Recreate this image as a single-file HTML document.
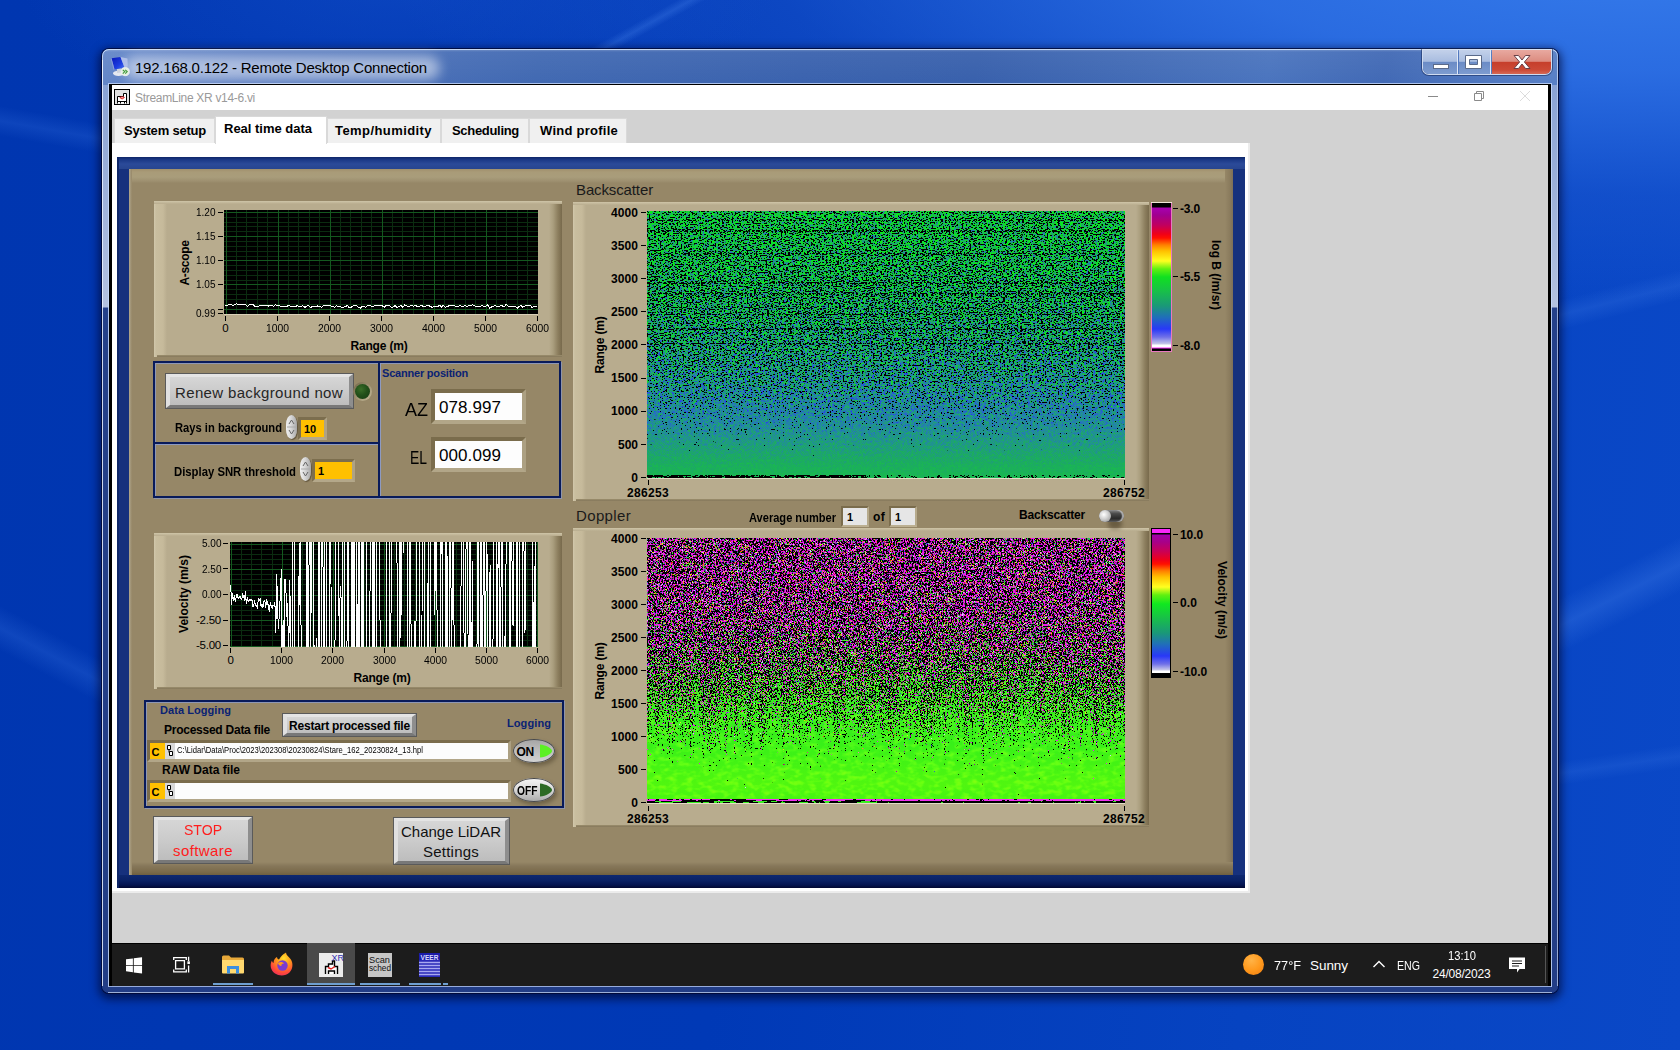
<!DOCTYPE html>
<html lang="en"><head><meta charset="utf-8"><title>192.168.0.122 - Remote Desktop Connection</title>
<style>
html,body{margin:0;padding:0}
body{width:1680px;height:1050px;overflow:hidden;position:relative;font-family:"Liberation Sans",sans-serif;
background:
 radial-gradient(ellipse 380px 150px at 400px -20px, rgba(24,84,206,.45) 0%, rgba(24,84,206,0) 100%),
 radial-gradient(ellipse 1280px 350px at 1660px -50px, rgba(54,124,236,1) 0%, rgba(46,112,228,.9) 35%, rgba(32,92,212,.4) 70%, rgba(20,80,200,0) 100%),
 linear-gradient(95deg, #0036b0 0%, #0039b6 45%, #0643c1 75%, #0a48c7 100%);}
.t{position:absolute;white-space:nowrap}
div{box-sizing:border-box}
svg{position:absolute;overflow:visible}
</style></head><body>
<div style="position:absolute;left:-50px;top:120px;width:260px;height:30px;transform:rotate(10deg);background:linear-gradient(to bottom,rgba(60,120,230,0),rgba(60,120,230,.22),rgba(60,120,230,0))"></div>
<div style="position:absolute;left:-60px;top:640px;width:240px;height:40px;transform:rotate(28deg);background:linear-gradient(to bottom,rgba(60,120,230,0),rgba(60,120,230,.25),rgba(60,120,230,0))"></div>
<div style="position:absolute;left:1540px;top:560px;width:200px;height:50px;transform:rotate(-27deg);background:linear-gradient(to bottom,rgba(70,130,235,0),rgba(70,130,235,.3),rgba(70,130,235,0))"></div>
<div style="position:absolute;left:1540px;top:280px;width:200px;height:30px;transform:rotate(-14deg);background:linear-gradient(to bottom,rgba(70,130,235,0),rgba(70,130,235,.22),rgba(70,130,235,0))"></div>
<div style="position:absolute;left:1540px;top:750px;width:200px;height:24px;transform:rotate(-8deg);background:linear-gradient(to bottom,rgba(70,130,235,0),rgba(70,130,235,.18),rgba(70,130,235,0))"></div>
<div style="position:absolute;left:560px;top:16px;width:180px;height:14px;transform:rotate(-29deg);background:linear-gradient(to bottom,rgba(70,130,235,0),rgba(70,130,235,.3),rgba(70,130,235,0))"></div>
<div id="win" style="position:absolute;left:102px;top:49px;width:1456px;height:944px;border-radius:7px;
box-shadow:0 0 0 1px rgba(0,8,50,.8),0 3px 10px 3px rgba(0,6,45,.7);
background:linear-gradient(to bottom,#7d99cf 0px,#8aa3d4 36px,#b3c1e0 258px,#24408a 259px,#223d86 100%);"></div>
<div style="position:absolute;left:102px;top:49px;width:1456px;height:36px;border-radius:7px 7px 0 0;
background:linear-gradient(to bottom,rgba(255,255,255,.28) 0,rgba(255,255,255,.05) 3px,rgba(255,255,255,0) 100%),
linear-gradient(100deg,#6487c8 0%,#5578be 10%,#4169b2 30%,#3a62ae 48%,#3860ac 60%,#4a74be 80%,#4169b5 88%,#5880c6 100%);
box-shadow:inset 0 1px 0 rgba(220,235,255,.8),inset 1px 0 0 rgba(220,235,255,.7),inset -1px 0 0 rgba(200,220,250,.6)"></div>
<div style="position:absolute;left:102px;top:60px;width:1px;height:926px;background:rgba(235,242,255,.85)"></div>
<div style="position:absolute;left:1557px;top:60px;width:1px;height:926px;background:rgba(190,205,235,.75)"></div>
<div style="position:absolute;left:108px;top:84px;width:1px;height:903px;background:rgba(200,218,250,.85)"></div>
<div style="position:absolute;left:1551px;top:84px;width:1px;height:903px;background:rgba(200,218,250,.85)"></div>
<div style="position:absolute;left:108px;top:986px;width:1444px;height:1px;background:rgba(170,190,235,.85)"></div>
<div style="position:absolute;left:108px;top:83px;width:1444px;height:1px;background:rgba(200,218,250,.8)"></div>
<div style="position:absolute;left:108px;top:992px;width:1444px;height:1px;background:rgba(210,225,250,.7)"></div>
<div style="position:absolute;left:124px;top:56px;width:316px;height:24px;border-radius:12px;background:rgba(255,255,255,.5);filter:blur(6px)"></div>
<div class="t" style="left:135.00px;top:57.67px;font-size:15px;line-height:20px;color:#000;letter-spacing:-0.221px;">192.168.0.122 - Remote Desktop Connection</div>
<svg style="left:110px;top:56px" width="22" height="22" viewBox="0 0 22 22"><defs><linearGradient id="rdg" x1="0" y1="0" x2="1" y2="1"><stop offset="0" stop-color="#0818b8"/><stop offset="0.6" stop-color="#1c3ce0"/><stop offset="1" stop-color="#4a74f0"/></linearGradient></defs>
<ellipse cx="8.500" cy="17.300" rx="5.500" ry="2.600" fill="#e6e9f0"/><path d="M7 13 L11 12.500 L11.500 16.500 L7 17 Z" fill="#cfd4de"/>
<path d="M1.500 2.200 L10.500 1 L14.500 11.500 L4.500 13.500 Z" fill="url(#rdg)"/>
<path d="M10.500 1 L17.500 2.500 L17.800 10.500 L14.500 11.500 Z" fill="#b4c2ea" opacity=".92"/>
<path d="M1.500 2.200 L4.500 13.500 L3.600 13.800 L0.800 2.800 Z" fill="#8ea0e0"/>
<circle cx="15.200" cy="15.600" r="4.100" fill="#e4eee0" stroke="#f4f7f2" stroke-width="0.800"/>
<path d="M12.800 17.600 L14.800 15.600 L12.800 13.800 M15.200 17.600 L17.200 15.600 L15.200 13.800" stroke="#3f9a3a" stroke-width="1.100" fill="none"/></svg>
<div style="position:absolute;left:1423px;top:50px;width:128px;height:24px;border-radius:0 0 6px 6px;box-shadow:0 0 0 1px rgba(225,235,252,.9),0 0 0 2px rgba(20,40,90,.55);overflow:hidden">
<div style="position:absolute;left:0;top:0;width:35px;height:25px;background:linear-gradient(to bottom,#c3d1ea 0,#a9bde0 45%,#6b8cc6 50%,#7f9dd0 100%);border-right:1px solid #dfe8f6"></div>
<div style="position:absolute;left:36px;top:0;width:32px;height:25px;background:linear-gradient(to bottom,#c3d1ea 0,#a9bde0 45%,#6b8cc6 50%,#7f9dd0 100%);border-right:1px solid #dfe8f6"></div>
<div style="position:absolute;left:69px;top:0;width:59px;height:25px;background:linear-gradient(to bottom,#e8a9a0 0,#dc8c80 45%,#c63f2c 50%,#cc4a36 80%,#d8705c 100%)"></div>
</div>
<svg style="left:1422px;top:49.5px" width="130" height="25" viewBox="0 0 130 25">
<rect x="11.5" y="14.5" width="15" height="4" fill="#fff" stroke="#5a6a8a" stroke-width="1"/>
<path d="M43.5 5.500 h16 v13 h-16 Z M47.500 9.500 v5 h8 v-5 Z" fill="#fff" fill-rule="evenodd" stroke="#5a6a8a" stroke-width="1"/>
<path d="M92 5.500 L96.500 5.500 L100 10 L103.500 5.500 L108 5.500 L102.400 12 L108 18.500 L103.500 18.500 L100 14 L96.500 18.500 L92 18.500 L97.600 12 Z" fill="#fff" stroke="#6a4048" stroke-width="1"/>
</svg>
<div style="position:absolute;left:109px;top:84px;width:1442px;height:902px;background:#000"></div>
<div style="position:absolute;left:112px;top:85px;width:1436px;height:25px;background:#fff"></div>
<div style="position:absolute;left:112px;top:110px;width:1436px;height:833px;background:#d2d2d2"></div>
<svg style="left:114px;top:89px" width="17" height="17" viewBox="0 0 17 17"><rect x="0.500" y="0.500" width="15" height="15" fill="#e2e2e2" stroke="#000"/>
<path d="M3.500 14.500 V7.500 H9.500 V4.500 H12.500 V14.500 M6.500 14.500 V12.500 H10.500 V14.500 M3.500 12.500 H12.500" fill="#fff" stroke="#000" stroke-width="1"/>
<path d="M5.800 8.500 Q8 11.500 10.400 8.500 Q8 7 5.800 8.500" fill="none" stroke="#e01818" stroke-width="1"/></svg>
<div class="t" style="left:135.00px;top:90.14px;font-size:12px;line-height:16px;color:#9a9a9a;letter-spacing:-0.307px;">StreamLine XR v14-6.vi</div>
<svg style="left:1420px;top:87px" width="120" height="18" viewBox="0 0 120 18">
<path d="M8 9.500 h10" stroke="#8a8a8a" stroke-width="1"/>
<path d="M54.500 6.500 h7 v7 h-7 Z M56.500 6.500 v-2 h7 v7 h-2" fill="none" stroke="#8a8a8a" stroke-width="1"/>
<path d="M100 4 l10 10 M110 4 l-10 10" stroke="#dcdcdc" stroke-width="1"/></svg>
<div style="position:absolute;left:114px;top:118px;width:101px;height:25px;background:#f0f0f0;border:1px solid #d9d9d9;border-bottom:none"></div>
<div class="t" style="left:124.00px;top:122.15px;font-size:13px;line-height:17px;color:#000;font-weight:bold;letter-spacing:-0.211px;">System setup</div>
<div style="position:absolute;left:327px;top:118px;width:114px;height:25px;background:#f0f0f0;border:1px solid #d9d9d9;border-bottom:none"></div>
<div class="t" style="left:335.00px;top:122.15px;font-size:13px;line-height:17px;color:#000;font-weight:bold;letter-spacing:0.424px;">Temp/humidity</div>
<div style="position:absolute;left:441px;top:118px;width:88px;height:25px;background:#f0f0f0;border:1px solid #d9d9d9;border-bottom:none"></div>
<div class="t" style="left:452.00px;top:122.15px;font-size:13px;line-height:17px;color:#000;font-weight:bold;letter-spacing:-0.307px;">Scheduling</div>
<div style="position:absolute;left:529px;top:118px;width:98px;height:25px;background:#f0f0f0;border:1px solid #d9d9d9;border-bottom:none"></div>
<div class="t" style="left:540.00px;top:122.15px;font-size:13px;line-height:17px;color:#000;font-weight:bold;letter-spacing:0.251px;">Wind profile</div>
<div style="position:absolute;left:112px;top:143px;width:1138px;height:750px;background:#ececec"></div>
<div style="position:absolute;left:112px;top:143px;width:1136px;height:748px;background:#fff"></div>
<div style="position:absolute;left:215px;top:116px;width:112px;height:28px;background:#fff;border:1px solid #d9d9d9;border-bottom:none"></div>
<div class="t" style="left:224.00px;top:120.15px;font-size:13px;line-height:17px;color:#000;font-weight:bold;letter-spacing:-0.011px;">Real time data</div>
<div style="position:absolute;left:117px;top:157px;width:1128px;height:731px;background:#16317d">
<div style="position:absolute;left:0;top:0;width:100%;height:12px;background:linear-gradient(to bottom,#0e2668 0,#1c3a88 3px,#2b4a99 7px,#27458f 12px)"></div>
<div style="position:absolute;left:0;bottom:0;width:100%;height:13px;background:linear-gradient(to bottom,#0d2870 0,#0a2266 5px,#041450 10px,#010830 13px)"></div>
<div style="position:absolute;left:0;top:0;width:2px;height:100%;background:#0e2668"></div>
</div>
<div style="position:absolute;left:129px;top:169px;width:1104px;height:706px;background:#968767">
<div style="position:absolute;left:0;top:0;width:100%;height:14px;background:linear-gradient(to bottom,#a08f6c 0,#a99b78 3px,#a99d7b 8px,#9e9070 12px,#968767 14px)"></div>
<div style="position:absolute;right:0;top:0;width:8px;height:100%;background:linear-gradient(to right,#968767,#8a7b5d 5px,#7d7058 8px)"></div>
<div style="position:absolute;left:0;bottom:0;width:100%;height:13px;background:linear-gradient(to bottom,#968767 0,#86775a 4px,#7a6a4a 10px,#6e5f40 13px)"></div>
<div style="position:absolute;left:0;top:0;width:3px;height:100%;background:linear-gradient(to right,#b0a68c,#968767)"></div>
</div>
<div style="position:absolute;left:154px;top:201px;width:408px;height:156px;background:#b8ac8e">
<div style="position:absolute;left:0;top:0;width:13px;height:100%;background:linear-gradient(to right,#d2c8ac 0,#c9be9f 2px,#c6ba9b 9px,#b8ac8e 13px)"></div>
<div style="position:absolute;right:0;top:0;width:13px;height:100%;background:linear-gradient(to right,#b8ac8e 0,#aa9e7e 4px,#8c7e5e 9px,#786a4c 13px)"></div>
<div style="position:absolute;left:0;top:0;width:100%;height:3px;background:linear-gradient(to bottom,#cfc5a8,#b8ac8e)"></div>
<div style="position:absolute;left:3px;right:0;bottom:0;height:2px;background:linear-gradient(to bottom,#9c8f6e,#84765a)"></div>
</div>
<div style="position:absolute;left:154px;top:533px;width:408px;height:156px;background:#b8ac8e">
<div style="position:absolute;left:0;top:0;width:13px;height:100%;background:linear-gradient(to right,#d2c8ac 0,#c9be9f 2px,#c6ba9b 9px,#b8ac8e 13px)"></div>
<div style="position:absolute;right:0;top:0;width:13px;height:100%;background:linear-gradient(to right,#b8ac8e 0,#aa9e7e 4px,#8c7e5e 9px,#786a4c 13px)"></div>
<div style="position:absolute;left:0;top:0;width:100%;height:3px;background:linear-gradient(to bottom,#cfc5a8,#b8ac8e)"></div>
<div style="position:absolute;left:3px;right:0;bottom:0;height:2px;background:linear-gradient(to bottom,#9c8f6e,#84765a)"></div>
</div>
<div style="position:absolute;left:573px;top:202px;width:576px;height:299px;background:#b8ac8e">
<div style="position:absolute;left:0;top:0;width:13px;height:100%;background:linear-gradient(to right,#d2c8ac 0,#c9be9f 2px,#c6ba9b 9px,#b8ac8e 13px)"></div>
<div style="position:absolute;right:0;top:0;width:13px;height:100%;background:linear-gradient(to right,#b8ac8e 0,#aa9e7e 4px,#8c7e5e 9px,#786a4c 13px)"></div>
<div style="position:absolute;left:0;top:0;width:100%;height:3px;background:linear-gradient(to bottom,#cfc5a8,#b8ac8e)"></div>
<div style="position:absolute;left:3px;right:0;bottom:0;height:2px;background:linear-gradient(to bottom,#9c8f6e,#84765a)"></div>
</div>
<div style="position:absolute;left:573px;top:528px;width:576px;height:299px;background:#b8ac8e">
<div style="position:absolute;left:0;top:0;width:13px;height:100%;background:linear-gradient(to right,#d2c8ac 0,#c9be9f 2px,#c6ba9b 9px,#b8ac8e 13px)"></div>
<div style="position:absolute;right:0;top:0;width:13px;height:100%;background:linear-gradient(to right,#b8ac8e 0,#aa9e7e 4px,#8c7e5e 9px,#786a4c 13px)"></div>
<div style="position:absolute;left:0;top:0;width:100%;height:3px;background:linear-gradient(to bottom,#cfc5a8,#b8ac8e)"></div>
<div style="position:absolute;left:3px;right:0;bottom:0;height:2px;background:linear-gradient(to bottom,#9c8f6e,#84765a)"></div>
</div>
<svg width="314" height="104" viewBox="0 0 314 104" shape-rendering="crispEdges" style="left:224px;top:210px;overflow:hidden"><rect width="314" height="104" fill="#000"/><path d="M12.5 0V104M22.5 0V104M33.5 0V104M43.5 0V104M64.5 0V104M74.5 0V104M85.5 0V104M95.5 0V104M116.5 0V104M126.5 0V104M137.5 0V104M147.5 0V104M168.5 0V104M178.5 0V104M189.5 0V104M199.5 0V104M220.5 0V104M230.5 0V104M241.5 0V104M251.5 0V104M272.5 0V104M282.5 0V104M293.5 0V104M303.5 0V104M0 7.5H314M0 12.5H314M0 16.5H314M0 21.5H314M0 31.5H314M0 36.5H314M0 41.5H314M0 46.5H314M0 55.5H314M0 60.5H314M0 65.5H314M0 70.5H314M0 79.5H314M0 84.5H314M0 89.5H314M0 94.5H314M0 104.5H314" stroke="#0b2c10" stroke-width="1" fill="none"/><path d="M2.5 0V104M54.5 0V104M106.5 0V104M158.5 0V104M210.5 0V104M262.5 0V104M314.5 0V104M0 2.5H314M0 26.5H314M0 50.5H314M0 74.5H314M0 99.5H314" stroke="#14581f" stroke-width="1" fill="none"/><polyline points="1.5,95.8 3.3,95.3 5.2,94.8 7.0,94.3 8.9,95.3 10.7,94.8 12.6,93.8 14.4,94.4 16.3,94.0 18.1,94.7 20.0,94.6 21.8,94.8 23.7,96.3 25.5,94.4 27.3,94.8 29.2,94.8 31.0,96.6 32.9,96.7 34.7,96.1 36.6,95.8 38.4,95.3 40.3,95.6 42.1,95.2 44.0,96.2 45.8,95.5 47.7,95.5 49.5,96.4 51.3,94.6 53.2,95.6 55.0,95.1 56.9,96.6 58.7,96.8 60.6,96.5 62.4,96.3 64.3,95.8 66.1,96.1 68.0,96.6 69.8,97.0 71.7,96.7 73.5,95.3 75.3,96.9 77.2,96.1 79.0,95.9 80.9,97.4 82.7,96.2 84.6,95.2 86.4,97.8 88.3,96.5 90.1,96.3 92.0,96.9 93.8,95.9 95.7,96.3 97.5,97.4 99.3,95.6 101.2,95.7 103.0,95.5 104.9,95.1 106.7,96.0 108.6,96.2 110.4,97.3 112.3,95.8 114.1,96.7 116.0,96.6 117.8,97.2 119.7,97.0 121.5,96.7 123.3,95.3 125.2,97.8 127.0,97.4 128.9,96.1 130.7,95.1 132.6,95.8 134.4,97.7 136.3,98.2 138.1,96.0 140.0,96.8 141.8,97.1 143.7,95.5 145.5,95.4 147.3,96.1 149.2,96.1 151.0,95.9 152.9,95.0 154.7,95.8 156.6,95.8 158.4,95.8 160.3,97.5 162.1,95.3 164.0,95.5 165.8,95.8 167.7,97.8 169.5,96.7 171.3,95.6 173.2,97.7 175.0,96.4 176.9,95.5 178.7,97.3 180.6,95.0 182.4,95.8 184.3,96.4 186.1,96.0 188.0,95.7 189.8,96.2 191.7,95.4 193.5,96.8 195.3,96.6 197.2,95.4 199.0,96.2 200.9,96.9 202.7,95.5 204.6,95.1 206.4,96.6 208.3,97.3 210.1,96.4 212.0,96.4 213.8,96.5 215.7,95.2 217.5,97.0 219.3,95.3 221.2,97.2 223.0,96.9 224.9,95.8 226.7,95.4 228.6,95.6 230.4,96.0 232.3,96.1 234.1,96.1 236.0,95.8 237.8,96.4 239.7,96.0 241.5,95.8 243.3,96.2 245.2,95.7 247.0,95.8 248.9,94.7 250.7,96.0 252.6,96.6 254.4,96.5 256.3,96.3 258.1,95.5 260.0,96.5 261.8,96.0 263.7,94.8 265.5,98.2 267.3,97.1 269.2,96.1 271.0,95.9 272.9,96.1 274.7,96.6 276.6,95.7 278.4,96.0 280.3,96.7 282.1,94.4 284.0,96.0 285.8,96.7 287.7,96.3 289.5,96.4 291.3,96.3 293.2,98.4 295.0,96.6 296.9,95.5 298.7,97.2 300.6,96.3 302.4,95.5 304.3,95.6 306.1,95.1 308.0,97.6 309.8,96.5 311.7,96.5 313.5,95.8" fill="none" stroke="#fff" stroke-width="1" shape-rendering="crispEdges"/></svg>
<div style="position:absolute;left:224px;top:314px;width:314px;height:1px;background:#d8d0b8"></div>
<div class="t" style="left:196.00px;top:204.63px;font-size:11.5px;line-height:15px;color:#000;transform:scaleX(0.8714);transform-origin:0 50%;">1.20</div>
<div style="position:absolute;left:218px;top:212px;width:5px;height:1px;background:#000"></div>
<div class="t" style="left:196.00px;top:228.63px;font-size:11.5px;line-height:15px;color:#000;transform:scaleX(0.8714);transform-origin:0 50%;">1.15</div>
<div style="position:absolute;left:218px;top:236px;width:5px;height:1px;background:#000"></div>
<div class="t" style="left:196.00px;top:253.03px;font-size:11.5px;line-height:15px;color:#000;transform:scaleX(0.8714);transform-origin:0 50%;">1.10</div>
<div style="position:absolute;left:218px;top:260px;width:5px;height:1px;background:#000"></div>
<div class="t" style="left:196.00px;top:277.03px;font-size:11.5px;line-height:15px;color:#000;transform:scaleX(0.8714);transform-origin:0 50%;">1.05</div>
<div style="position:absolute;left:218px;top:284px;width:5px;height:1px;background:#000"></div>
<div class="t" style="left:196.00px;top:306.13px;font-size:11.5px;line-height:15px;color:#000;transform:scaleX(0.8714);transform-origin:0 50%;">0.99</div>
<div style="position:absolute;left:218px;top:313px;width:5px;height:1px;background:#000"></div>
<div style="position:absolute;left:218px;top:309px;width:5px;height:1px;background:#000"></div>
<div class="t" style="left:222.30px;top:321.13px;font-size:11.5px;line-height:15px;color:#000;">0</div>
<div style="position:absolute;left:225px;top:316px;width:1px;height:5px;background:#000"></div>
<div class="t" style="left:266.00px;top:321.13px;font-size:11.5px;line-height:15px;color:#000;transform:scaleX(0.8992);transform-origin:0 50%;">1000</div>
<div style="position:absolute;left:277px;top:316px;width:1px;height:5px;background:#000"></div>
<div class="t" style="left:318.00px;top:321.13px;font-size:11.5px;line-height:15px;color:#000;transform:scaleX(0.8992);transform-origin:0 50%;">2000</div>
<div style="position:absolute;left:329px;top:316px;width:1px;height:5px;background:#000"></div>
<div class="t" style="left:370.00px;top:321.13px;font-size:11.5px;line-height:15px;color:#000;transform:scaleX(0.8992);transform-origin:0 50%;">3000</div>
<div style="position:absolute;left:381px;top:316px;width:1px;height:5px;background:#000"></div>
<div class="t" style="left:422.00px;top:321.13px;font-size:11.5px;line-height:15px;color:#000;transform:scaleX(0.8992);transform-origin:0 50%;">4000</div>
<div style="position:absolute;left:433px;top:316px;width:1px;height:5px;background:#000"></div>
<div class="t" style="left:474.00px;top:321.13px;font-size:11.5px;line-height:15px;color:#000;transform:scaleX(0.8992);transform-origin:0 50%;">5000</div>
<div style="position:absolute;left:485px;top:316px;width:1px;height:5px;background:#000"></div>
<div class="t" style="left:526.00px;top:321.13px;font-size:11.5px;line-height:15px;color:#000;transform:scaleX(0.8992);transform-origin:0 50%;">6000</div>
<div style="position:absolute;left:537px;top:316px;width:1px;height:5px;background:#000"></div>
<div class="t" style="left:350.50px;top:338.14px;font-size:12px;line-height:16px;color:#000;font-weight:bold;letter-spacing:-0.187px;">Range (m)</div>
<div class="t" style="left:161.50px;top:255.00px;font-size:12px;line-height:16px;color:#000;width:45.00px;transform:rotate(-90deg);transform-origin:50% 50%;font-weight:bold;letter-spacing:-0.336px;">A-scope</div>
<svg width="308" height="105" viewBox="0 0 308 105" shape-rendering="crispEdges" style="left:230px;top:542px;overflow:hidden"><rect width="308" height="105" fill="#000"/><path d="M11.5 0V105M21.5 0V105M31.5 0V105M42.5 0V105M62.5 0V105M72.5 0V105M82.5 0V105M93.5 0V105M113.5 0V105M123.5 0V105M134.5 0V105M144.5 0V105M164.5 0V105M174.5 0V105M185.5 0V105M195.5 0V105M215.5 0V105M226.5 0V105M236.5 0V105M246.5 0V105M266.5 0V105M277.5 0V105M287.5 0V105M297.5 0V105M0 7.5H308M0 12.5H308M0 17.5H308M0 22.5H308M0 32.5H308M0 37.5H308M0 42.5H308M0 48.5H308M0 58.5H308M0 63.5H308M0 68.5H308M0 73.5H308M0 83.5H308M0 88.5H308M0 93.5H308M0 98.5H308" stroke="#0b2c10" stroke-width="1" fill="none"/><path d="M1.5 0V105M52.5 0V105M103.5 0V105M154.5 0V105M205.5 0V105M256.5 0V105M307.5 0V105M0 2.5H308M0 27.5H308M0 53.5H308M0 78.5H308M0 104.5H308" stroke="#14581f" stroke-width="1" fill="none"/><polyline points="0.7,43.4 1.6,62.5 2.5,51.3 3.5,59.2 4.4,53.0 5.3,59.8 6.2,55.0 7.1,52.1 8.1,56.4 9.0,55.6 9.9,54.0 10.8,56.2 11.7,57.1 12.7,52.4 13.6,54.1 14.5,58.5 15.4,49.4 16.3,61.5 17.3,55.5 18.2,59.3 19.1,58.3 20.0,56.8 20.9,58.5 21.9,57.4 22.8,64.3 23.7,64.5 24.6,58.2 25.5,63.3 26.5,63.7 27.4,65.3 28.3,57.1 29.2,58.9 30.1,57.0 31.1,64.5 32.0,61.9 32.9,65.6 33.8,60.0 34.7,57.7 35.7,65.5 36.6,58.3 37.5,60.3 38.4,64.1 39.3,69.8 40.3,59.7 41.2,64.5 42.1,66.3 43.0,63.4 43.9,63.6 44.9,60.5 45.8,91.4 46.7,31.9 47.6,67.7 48.5,87.3 49.4,69.2 50.4,53.0 51.3,27.2 52.2,131.5 53.1,77.9 54.0,135.7 55.0,36.6 55.9,48.0 56.8,74.7 57.7,61.4 58.6,127.9 59.6,38.5 60.5,71.8 61.4,278.1 62.3,278.1 63.2,-175.1 64.2,-13.7 65.1,266.5 66.0,266.5 66.9,284.5 67.8,284.5 68.8,33.8 69.7,63.3 70.6,-116.3 71.5,323.3 72.4,323.3 73.4,323.3 74.3,323.3 75.2,341.0 76.1,319.3 77.0,-236.5 78.0,236.2 78.9,47.6 79.8,-135.1 80.7,206.7 81.6,-177.0 82.6,-205.6 83.5,234.3 84.4,103.5 85.3,165.0 86.2,96.4 87.2,228.1 88.1,283.3 89.0,-215.8 89.9,134.3 90.8,274.2 91.8,-98.1 92.7,-98.1 93.6,258.6 94.5,221.4 95.4,-249.2 96.4,100.7 97.3,140.2 98.2,140.2 99.1,151.6 100.0,-71.5 101.0,42.0 101.9,177.5 102.8,289.1 103.7,218.4 104.6,306.7 105.6,-195.3 106.5,-195.3 107.4,-142.7 108.3,-54.9 109.2,110.0 110.2,43.6 111.1,55.9 112.0,158.2 112.9,-130.4 113.8,-130.4 114.8,193.7 115.7,193.7 116.6,193.7 117.5,-13.5 118.4,-13.5 119.4,283.7 120.3,283.7 121.2,102.8 122.1,-201.1 123.0,331.6 124.0,-215.0 124.9,198.0 125.8,198.0 126.7,-26.0 127.6,232.3 128.6,-52.6 129.5,-132.9 130.4,335.4 131.3,335.4 132.2,-239.4 133.2,207.9 134.1,-44.1 135.0,-43.0 135.9,-184.8 136.8,170.0 137.8,170.0 138.7,170.0 139.6,170.0 140.5,-87.2 141.4,-87.2 142.3,-241.7 143.3,349.3 144.2,-179.4 145.1,324.2 146.0,125.4 146.9,-235.0 147.9,-65.1 148.8,-65.1 149.7,-65.1 150.6,355.8 151.5,157.1 152.5,160.4 153.4,160.4 154.3,224.9 155.2,224.9 156.1,306.8 157.1,-42.7 158.0,-116.1 158.9,-116.1 159.8,270.1 160.7,117.4 161.7,-26.6 162.6,-26.6 163.5,-163.2 164.4,-163.2 165.3,-120.9 166.3,-108.8 167.2,56.1 168.1,184.4 169.0,269.6 169.9,-78.7 170.9,95.8 171.8,-70.2 172.7,-197.8 173.6,10.8 174.5,-138.5 175.5,-138.5 176.4,-129.4 177.3,-226.0 178.2,306.0 179.1,306.0 180.1,-228.1 181.0,82.3 181.9,327.0 182.8,327.0 183.7,208.6 184.7,78.9 185.6,315.2 186.5,-190.4 187.4,-190.4 188.3,-97.5 189.3,-136.3 190.2,214.6 191.1,217.1 192.0,76.8 192.9,-158.5 193.9,-158.5 194.8,182.5 195.7,182.5 196.6,236.9 197.5,155.4 198.5,-65.2 199.4,276.5 200.3,61.3 201.2,-236.0 202.1,-236.0 203.1,-236.0 204.0,-75.0 204.9,73.4 205.8,-110.6 206.7,22.6 207.7,167.6 208.6,167.6 209.5,181.1 210.4,181.1 211.3,-249.5 212.3,121.7 213.2,-210.4 214.1,-210.4 215.0,-210.4 215.9,198.1 216.9,-10.5 217.8,187.2 218.7,187.2 219.6,53.9 220.5,-177.1 221.5,260.8 222.4,-58.3 223.3,-86.2 224.2,128.3 225.1,128.3 226.1,159.8 227.0,114.7 227.9,238.4 228.8,238.4 229.7,203.3 230.6,203.3 231.6,-173.4 232.5,-173.4 233.4,-103.6 234.3,186.6 235.2,186.6 236.2,-29.8 237.1,-29.8 238.0,91.5 238.9,165.2 239.8,-121.6 240.8,340.3 241.7,113.7 242.6,19.5 243.5,233.7 244.4,233.7 245.4,107.0 246.3,273.4 247.2,61.4 248.1,-199.0 249.0,253.7 250.0,185.9 250.9,-93.2 251.8,109.9 252.7,109.9 253.6,-50.5 254.6,-50.5 255.5,312.1 256.4,-137.9 257.3,81.3 258.2,154.7 259.2,96.9 260.1,23.4 261.0,208.9 261.9,208.9 262.8,163.0 263.8,-136.4 264.7,-136.4 265.6,-136.4 266.5,124.2 267.4,229.7 268.4,-101.4 269.3,7.2 270.2,138.0 271.1,34.7 272.0,-124.7 273.0,301.4 273.9,123.1 274.8,94.2 275.7,167.4 276.6,-233.3 277.6,-233.3 278.5,-108.5 279.4,-233.4 280.3,313.3 281.2,-208.9 282.2,72.1 283.1,83.8 284.0,-120.3 284.9,-120.3 285.8,-120.3 286.8,291.5 287.7,-70.2 288.6,-188.6 289.5,-188.6 290.4,357.2 291.4,357.2 292.3,335.0 293.2,-229.9 294.1,35.3 295.0,90.8 296.0,-108.6 296.9,-108.6 297.8,-218.3 298.7,-218.3 299.6,-124.8 300.6,-124.8 301.5,-250.6 302.4,164.8 303.3,210.0 304.2,23.9 305.2,340.1 306.1,-38.8" fill="none" stroke="#fff" stroke-width="1" shape-rendering="crispEdges"/></svg>
<div class="t" style="left:201.50px;top:536.43px;font-size:11.5px;line-height:15px;color:#000;transform:scaleX(0.8714);transform-origin:0 50%;">5.00</div>
<div style="position:absolute;left:223px;top:543px;width:5px;height:1px;background:#000"></div>
<div class="t" style="left:201.50px;top:561.63px;font-size:11.5px;line-height:15px;color:#000;transform:scaleX(0.8714);transform-origin:0 50%;">2.50</div>
<div style="position:absolute;left:223px;top:568px;width:5px;height:1px;background:#000"></div>
<div class="t" style="left:201.50px;top:587.23px;font-size:11.5px;line-height:15px;color:#000;transform:scaleX(0.8714);transform-origin:0 50%;">0.00</div>
<div style="position:absolute;left:223px;top:594px;width:5px;height:1px;background:#000"></div>
<div class="t" style="left:196.00px;top:612.63px;font-size:11.5px;line-height:15px;color:#000;letter-spacing:-0.241px;">-2.50</div>
<div style="position:absolute;left:223px;top:620px;width:5px;height:1px;background:#000"></div>
<div class="t" style="left:196.00px;top:638.13px;font-size:11.5px;line-height:15px;color:#000;letter-spacing:-0.241px;">-5.00</div>
<div style="position:absolute;left:223px;top:645px;width:5px;height:1px;background:#000"></div>
<div class="t" style="left:227.50px;top:653.13px;font-size:11.5px;line-height:15px;color:#000;">0</div>
<div style="position:absolute;left:230px;top:648px;width:1px;height:5px;background:#000"></div>
<div class="t" style="left:270.30px;top:653.13px;font-size:11.5px;line-height:15px;color:#000;transform:scaleX(0.8992);transform-origin:0 50%;">1000</div>
<div style="position:absolute;left:281px;top:648px;width:1px;height:5px;background:#000"></div>
<div class="t" style="left:321.40px;top:653.13px;font-size:11.5px;line-height:15px;color:#000;transform:scaleX(0.8992);transform-origin:0 50%;">2000</div>
<div style="position:absolute;left:332px;top:648px;width:1px;height:5px;background:#000"></div>
<div class="t" style="left:372.50px;top:653.13px;font-size:11.5px;line-height:15px;color:#000;transform:scaleX(0.8992);transform-origin:0 50%;">3000</div>
<div style="position:absolute;left:384px;top:648px;width:1px;height:5px;background:#000"></div>
<div class="t" style="left:423.60px;top:653.13px;font-size:11.5px;line-height:15px;color:#000;transform:scaleX(0.8992);transform-origin:0 50%;">4000</div>
<div style="position:absolute;left:435px;top:648px;width:1px;height:5px;background:#000"></div>
<div class="t" style="left:474.70px;top:653.13px;font-size:11.5px;line-height:15px;color:#000;transform:scaleX(0.8992);transform-origin:0 50%;">5000</div>
<div style="position:absolute;left:486px;top:648px;width:1px;height:5px;background:#000"></div>
<div class="t" style="left:525.80px;top:653.13px;font-size:11.5px;line-height:15px;color:#000;transform:scaleX(0.8992);transform-origin:0 50%;">6000</div>
<div style="position:absolute;left:537px;top:648px;width:1px;height:5px;background:#000"></div>
<div class="t" style="left:353.50px;top:670.14px;font-size:12px;line-height:16px;color:#000;font-weight:bold;letter-spacing:-0.187px;">Range (m)</div>
<div class="t" style="left:145.00px;top:586.00px;font-size:12px;line-height:16px;color:#000;width:78.00px;transform:rotate(-90deg);transform-origin:50% 50%;font-weight:bold;letter-spacing:0.044px;">Velocity (m/s)</div>
<svg width="0" height="0" style="left:0;top:0"><defs>
<filter id="bs" x="0" y="0" width="100%" height="100%" color-interpolation-filters="sRGB" filterUnits="objectBoundingBox">
<feTurbulence type="fractalNoise" baseFrequency="0.43 0.37" numOctaves="1" seed="5" result="n1"/>
<feColorMatrix in="n1" type="matrix" values="1 0 0 0 0  1 0 0 0 0  1 0 0 0 0  0 0 0 0 1" result="g1a"/>
<feTurbulence type="fractalNoise" baseFrequency="1.73 1.31" numOctaves="1" seed="9" result="n1b"/>
<feColorMatrix in="n1b" type="matrix" values="1 0 0 0 0  1 0 0 0 0  1 0 0 0 0  0 0 0 0 1" result="g1b"/>
<feComposite in="g1a" in2="g1b" operator="arithmetic" k1="0" k2="0.55" k3="0.8" k4="-0.175" result="g1"/>
<feColorMatrix in="SourceGraphic" type="matrix" values="1 0 0 0 0  1 0 0 0 0  1 0 0 0 0  0 0 0 0 1" result="amp"/>
<feColorMatrix in="SourceGraphic" type="matrix" values="0 1 0 0 0  0 1 0 0 0  0 1 0 0 0  0 0 0 0 1" result="off"/>
<feComposite in="g1" in2="amp" operator="arithmetic" k1="2.8" k2="0" k3="-1.4" k4="0.5" result="t"/>
<feComposite in="t" in2="off" operator="arithmetic" k1="0" k2="1" k3="1" k4="-0.5" result="s"/>
<feComponentTransfer in="s" result="col">
<feFuncR type="table" tableValues="0.157 0.157 0.141 0.125 0.110 0.094 0.063 0.031"/>
<feFuncG type="table" tableValues="0.251 0.376 0.502 0.596 0.675 0.753 0.847 0.941"/>
<feFuncB type="table" tableValues="0.910 0.816 0.690 0.533 0.376 0.282 0.188 0.094"/>
</feComponentTransfer>
<feTurbulence type="fractalNoise" baseFrequency="0.53 0.81" numOctaves="1" seed="11" result="n2"/>
<feColorMatrix in="n2" type="matrix" values="0 0 0 0 0  0 0 0 0 0  0 0 0 0 0  0 1 0 0 0" result="na"/>
<feColorMatrix in="SourceGraphic" type="matrix" values="0 0 0 0 0  0 0 0 0 0  0 0 0 0 0  0 0 1 0 0" result="dens"/>
<feComposite in="na" in2="dens" operator="arithmetic" k1="0" k2="60" k3="60" k4="-60" result="blk"/>
<feMerge><feMergeNode in="col"/><feMergeNode in="blk"/></feMerge>
</filter>
<linearGradient id="bsg" x1="0" y1="0" x2="0" y2="1"><stop offset="0.0000" stop-color="rgb(255,189,111)"/><stop offset="0.0313" stop-color="rgb(255,187,112)"/><stop offset="0.0333" stop-color="rgb(255,187,133)"/><stop offset="0.0367" stop-color="rgb(255,187,133)"/><stop offset="0.0387" stop-color="rgb(255,187,112)"/><stop offset="0.0713" stop-color="rgb(255,185,113)"/><stop offset="0.0733" stop-color="rgb(255,185,134)"/><stop offset="0.0767" stop-color="rgb(255,185,134)"/><stop offset="0.0787" stop-color="rgb(255,185,113)"/><stop offset="0.1000" stop-color="rgb(255,184,114)"/><stop offset="0.1563" stop-color="rgb(255,177,115)"/><stop offset="0.1583" stop-color="rgb(255,177,135)"/><stop offset="0.1617" stop-color="rgb(255,177,135)"/><stop offset="0.1637" stop-color="rgb(255,177,115)"/><stop offset="0.2500" stop-color="rgb(255,168,117)"/><stop offset="0.2663" stop-color="rgb(255,166,117)"/><stop offset="0.2683" stop-color="rgb(255,166,136)"/><stop offset="0.2717" stop-color="rgb(255,166,136)"/><stop offset="0.2737" stop-color="rgb(255,166,117)"/><stop offset="0.3063" stop-color="rgb(255,161,117)"/><stop offset="0.3083" stop-color="rgb(255,161,136)"/><stop offset="0.3117" stop-color="rgb(255,161,136)"/><stop offset="0.3137" stop-color="rgb(255,161,117)"/><stop offset="0.3750" stop-color="rgb(255,153,117)"/><stop offset="0.3838" stop-color="rgb(254,151,116)"/><stop offset="0.3858" stop-color="rgb(254,151,136)"/><stop offset="0.3892" stop-color="rgb(254,151,136)"/><stop offset="0.3912" stop-color="rgb(254,151,116)"/><stop offset="0.4388" stop-color="rgb(248,142,115)"/><stop offset="0.4408" stop-color="rgb(248,142,135)"/><stop offset="0.4442" stop-color="rgb(248,142,135)"/><stop offset="0.4462" stop-color="rgb(248,142,115)"/><stop offset="0.4938" stop-color="rgb(243,133,114)"/><stop offset="0.4958" stop-color="rgb(243,133,134)"/><stop offset="0.4992" stop-color="rgb(243,133,134)"/><stop offset="0.5000" stop-color="rgb(242,133,114)"/><stop offset="0.5012" stop-color="rgb(243,133,114)"/><stop offset="0.6000" stop-color="rgb(230,115,109)"/><stop offset="0.6750" stop-color="rgb(204,99,102)"/><stop offset="0.7500" stop-color="rgb(128,84,92)"/><stop offset="0.8000" stop-color="rgb(92,92,83)"/><stop offset="0.8500" stop-color="rgb(66,107,75)"/><stop offset="0.9000" stop-color="rgb(46,128,64)"/><stop offset="0.9500" stop-color="rgb(31,148,0)"/><stop offset="0.9900" stop-color="rgb(26,163,0)"/><stop offset="1.0000" stop-color="rgb(26,168,0)"/></linearGradient>
<filter id="dp" x="0" y="0" width="100%" height="100%" color-interpolation-filters="sRGB">
<feTurbulence type="fractalNoise" baseFrequency="0.66 0.52" numOctaves="1" seed="21" result="n1"/>
<feColorMatrix in="n1" type="matrix" values="1 0 0 0 0  1 0 0 0 0  1 0 0 0 0  0 0 0 0 1" result="g1"/>
<feComponentTransfer in="g1" result="col">
<feFuncR type="linear" slope="12.338" intercept="-6.135"/>
<feFuncG type="linear" slope="12.338" intercept="-6.135"/>
<feFuncB type="linear" slope="12.338" intercept="-6.135"/>
</feComponentTransfer>
<feComponentTransfer in="col" result="col2">
<feFuncR type="table" tableValues="0.000 0.000 0.000 0.000 0.000 0.000 0.000 0.000 0.000 0.000 0.000 0.000 0.620 0.620 0.620 0.620 0.620 0.620 0.620 0.620 0.620 0.620 0.620 0.620 0.620 0.620 0.620 0.620 0.620 0.620 0.620 0.620 0.620 0.620 0.620 0.620 0.620 0.941 0.941 0.941 0.941 0.941 0.941 0.941 0.941 0.941 0.941 0.941 0.941"/>
<feFuncG type="table" tableValues="0.000 0.000 0.000 0.000 0.000 0.000 0.000 0.000 0.000 0.000 0.000 0.000 0.055 0.055 0.055 0.055 0.055 0.055 0.055 0.055 0.055 0.055 0.055 0.055 0.055 0.055 0.055 0.055 0.055 0.055 0.055 0.055 0.055 0.055 0.055 0.055 0.055 0.110 0.110 0.110 0.110 0.110 0.110 0.110 0.110 0.110 0.110 0.110 0.110"/>
<feFuncB type="table" tableValues="0.000 0.000 0.000 0.000 0.000 0.000 0.000 0.000 0.000 0.000 0.000 0.000 0.647 0.647 0.647 0.647 0.647 0.647 0.647 0.647 0.647 0.647 0.647 0.647 0.647 0.647 0.647 0.647 0.647 0.647 0.647 0.647 0.647 0.647 0.647 0.647 0.647 0.941 0.941 0.941 0.941 0.941 0.941 0.941 0.941 0.941 0.941 0.941 0.941"/>
</feComponentTransfer>
<feTurbulence type="fractalNoise" baseFrequency="1.71 1.37" numOctaves="1" seed="77" result="n4"/>
<feColorMatrix in="n4" type="matrix" values="0 3.4 0 0 -1.2  0 3.4 0 0 -1.2  0 3.4 0 0 -1.2  60 0 0 0 -35.015" result="s4"/>
<feComponentTransfer in="s4" result="spr">
<feFuncR type="table" tableValues="0.824 0.471 0.157 0.118 0.118 0.549 0.941 1.000 0.941 0.784 1.000"/>
<feFuncG type="table" tableValues="0.824 0.471 0.235 0.549 0.863 0.941 0.941 0.627 0.078 0.000 0.431"/>
<feFuncB type="table" tableValues="1.000 0.980 0.941 0.588 0.157 0.118 0.157 0.000 0.078 0.353 0.745"/>
</feComponentTransfer>
<feMerge result="col3"><feMergeNode in="col2"/><feMergeNode in="spr"/></feMerge>
<feTurbulence type="fractalNoise" baseFrequency="0.31 0.004" numOctaves="2" seed="4" result="cn"/>
<feColorMatrix in="cn" type="matrix" values="0 0 0 0 0.5  0 1 0 0 0  0 0 0 0 0  0 0 0 0 1" result="dm"/>
<feDisplacementMap in="SourceGraphic" in2="dm" scale="90" xChannelSelector="R" yChannelSelector="G" result="src2"/>
<feTurbulence type="fractalNoise" baseFrequency="0.63 0.87" numOctaves="1" seed="33" result="n2"/>
<feColorMatrix in="n2" type="matrix" values="0 0 0 0 0  0 0 0 0 0  0 0 0 0 0  0 1 0 0 0" result="na"/>
<feColorMatrix in="src2" type="matrix" values="0 0 0 0 0  0 0 0 0 0  0 0 0 0 0  0 0 1 0 0" result="dens"/>
<feComposite in="na" in2="dens" operator="arithmetic" k1="0" k2="60" k3="60" k4="-60" result="msk"/>
<feComposite in="col3" in2="msk" operator="in" result="bad"/>
<feTurbulence type="fractalNoise" baseFrequency="0.71 0.59" numOctaves="1" seed="57" result="n3"/>
<feColorMatrix in="n3" type="matrix" values="0 0 0 0 0  0 0 0 0 0  0 0 0 0 0  0 1 0 0 0" result="na3"/>
<feColorMatrix in="src2" type="matrix" values="0 0 0 0 0  0 0 0 0 0  0 0 0 0 0  1 0 0 0 0" result="dens3"/>
<feComposite in="na3" in2="dens3" operator="arithmetic" k1="0" k2="60" k3="60" k4="-60" result="blk"/>
<feMerge><feMergeNode in="bad"/><feMergeNode in="blk"/></feMerge>
</filter>
<linearGradient id="dpg" gradientUnits="userSpaceOnUse" x1="0" y1="0" x2="0" y2="265"><stop offset="0.0000" stop-color="rgb(0,0,182)"/><stop offset="0.2000" stop-color="rgb(0,0,178)"/><stop offset="0.3000" stop-color="rgb(79,0,170)"/><stop offset="0.3750" stop-color="rgb(91,0,162)"/><stop offset="0.4500" stop-color="rgb(102,0,148)"/><stop offset="0.5000" stop-color="rgb(108,0,139)"/><stop offset="0.5500" stop-color="rgb(111,0,130)"/><stop offset="0.6000" stop-color="rgb(111,0,122)"/><stop offset="0.6375" stop-color="rgb(109,0,114)"/><stop offset="0.6750" stop-color="rgb(106,0,107)"/><stop offset="0.7125" stop-color="rgb(100,0,99)"/><stop offset="0.7500" stop-color="rgb(93,0,86)"/><stop offset="0.7750" stop-color="rgb(86,0,79)"/><stop offset="0.8000" stop-color="rgb(79,0,72)"/><stop offset="0.8375" stop-color="rgb(72,0,65)"/><stop offset="0.8750" stop-color="rgb(67,0,63)"/><stop offset="0.9250" stop-color="rgb(57,0,54)"/><stop offset="1.0000" stop-color="rgb(0,0,0)"/></linearGradient>
<linearGradient id="dpbase" x1="0" y1="0" x2="0" y2="1"><stop offset="0" stop-color="#30e428"/><stop offset="0.55" stop-color="#34ea22"/><stop offset="0.78" stop-color="#38f018"/><stop offset="0.93" stop-color="#50f610"/><stop offset="1" stop-color="#44f412"/></linearGradient>
<filter id="dpb" x="0" y="0" width="100%" height="100%" color-interpolation-filters="sRGB">
<feTurbulence type="fractalNoise" baseFrequency="0.13 0.21" numOctaves="2" seed="8" result="n"/>
<feColorMatrix in="n" type="matrix" values="0.45 0 0 0 -0.2  0.15 0 0 0 -0.06  0 0 0 0 0  0 0 0 0 1" result="d"/>
<feComposite in="SourceGraphic" in2="d" operator="arithmetic" k1="0" k2="1" k3="1" k4="0"/>
</filter>
</defs></svg>
<svg style="left:647px;top:211px" width="478" height="267" viewBox="0 0 478 267"><rect width="478" height="267" fill="url(#bsg)" filter="url(#bs)"/></svg>
<svg style="left:647px;top:211px" width="478" height="268" viewBox="0 0 478 268"><path d="M0 264.5h6M7 264.5h9M20 264.5h2M24 264.5h20M48 264.5h3M53 264.5h3M58 264.5h2M61 264.5h14M77 264.5h6M84 264.5h1M89 264.5h4M94 264.5h4M99 264.5h2M104 264.5h4M109 264.5h2M112 264.5h1M114 264.5h3M118 264.5h1M123 264.5h6M130 264.5h2M138 264.5h2M141 264.5h6M149 264.5h14M168 264.5h3M173 264.5h6M182 264.5h14M198 264.5h6M205 264.5h14M222 264.5h1M227 264.5h1M230 264.5h3M240 264.5h1M244 264.5h1M251 264.5h3M262 264.5h1M291 264.5h2M302 264.5h2M306 264.5h1M313 264.5h2M317 264.5h1M321 264.5h1M325 264.5h2M331 264.5h1M339 264.5h1M351 264.5h2M361 264.5h2M367 264.5h1M373 264.5h1M381 264.5h1M384 264.5h2M388 264.5h1M395 264.5h2M402 264.5h1M417 264.5h2M423 264.5h1M427 264.5h1M430 264.5h1M432 264.5h2M435 264.5h2M445 264.5h2M455 264.5h3M461 264.5h2M470 264.5h2" stroke="#000" stroke-width="1" fill="none" shape-rendering="crispEdges"/><path d="M0 265.5h20M22 265.5h9M32 265.5h4M39 265.5h1M45 265.5h4M52 265.5h6M59 265.5h4M64 265.5h1M68 265.5h9M78 265.5h14M93 265.5h14M112 265.5h4M117 265.5h6M128 265.5h1M130 265.5h4M137 265.5h20M160 265.5h9M172 265.5h20M193 265.5h9M203 265.5h2M206 265.5h1M209 265.5h2M214 265.5h3M218 265.5h1M220 265.5h1M222 265.5h1M228 265.5h1M231 265.5h3M240 265.5h1M252 265.5h1M264 265.5h2M267 265.5h1M281 265.5h1M290 265.5h3M306 265.5h1M308 265.5h3M315 265.5h2M319 265.5h2M328 265.5h2M333 265.5h3M341 265.5h2M344 265.5h1M346 265.5h1M351 265.5h3M360 265.5h3M369 265.5h1M376 265.5h2M379 265.5h1M382 265.5h1M384 265.5h2M389 265.5h1M402 265.5h2M406 265.5h2M411 265.5h3M419 265.5h1M429 265.5h3M437 265.5h1M439 265.5h1M446 265.5h2M456 265.5h1M458 265.5h2" stroke="#000" stroke-width="1" fill="none" shape-rendering="crispEdges"/><path d="M1 266.5h4M8 266.5h1M10 266.5h1M14 266.5h1M17 266.5h20M38 266.5h6M46 266.5h14M61 266.5h14M78 266.5h20M99 266.5h4M105 266.5h20M128 266.5h9M138 266.5h4M145 266.5h2M149 266.5h2M154 266.5h4M159 266.5h1M163 266.5h20M184 266.5h20M205 266.5h6M214 266.5h6M227 266.5h3M240 266.5h2M249 266.5h2M254 266.5h2M258 266.5h1M266 266.5h1M268 266.5h2M277 266.5h3M281 266.5h1M284 266.5h3M290 266.5h2M293 266.5h2M302 266.5h2M307 266.5h2M317 266.5h2M320 266.5h3M329 266.5h1M332 266.5h1M357 266.5h1M360 266.5h1M362 266.5h3M373 266.5h3M381 266.5h1M385 266.5h2M388 266.5h1M397 266.5h1M405 266.5h1M410 266.5h2M426 266.5h2M436 266.5h1M443 266.5h3M449 266.5h1M460 266.5h1M466 266.5h2M474 266.5h3" stroke="#000" stroke-width="1" fill="none" shape-rendering="crispEdges"/></svg>
<div style="position:absolute;left:647px;top:478px;width:478px;height:1px;background:#e4dcc6"></div>
<div style="position:absolute;left:647px;top:803px;width:478px;height:1px;background:#e4dcc6"></div>
<svg style="left:647px;top:538px;overflow:hidden" width="478" height="265" viewBox="0 0 478 265"><rect width="478" height="265" fill="url(#dpbase)" filter="url(#dpb)"/><rect x="0" y="-90" width="478" height="445" fill="url(#dpg)" filter="url(#dp)"/><rect x="0" y="261" width="478" height="2" fill="#f030f0"/><path d="M1 261.5h1M9 261.5h3M20 261.5h6M29 261.5h3M34 261.5h3M43 261.5h2M54 261.5h1M63 261.5h20M85 261.5h14M132 261.5h9M160 261.5h2M175 261.5h4M206 261.5h3M228 261.5h1M244 261.5h2M257 261.5h1M287 261.5h1M305 261.5h1M320 261.5h2M329 261.5h3M333 261.5h3M341 261.5h1M367 261.5h3M383 261.5h2M402 261.5h1M447 261.5h1M462 261.5h3" stroke="#000" stroke-width="1" fill="none" shape-rendering="crispEdges"/><path d="M8 262.5h4M35 262.5h14M51 262.5h20M73 262.5h14M89 262.5h20M115 262.5h14M150 262.5h1M154 262.5h4M159 262.5h1M163 262.5h2M167 262.5h9M198 262.5h20M224 262.5h1M234 262.5h1M271 262.5h2M294 262.5h1M298 262.5h2M302 262.5h1M306 262.5h2M333 262.5h2M336 262.5h1M355 262.5h3M360 262.5h2M386 262.5h1M396 262.5h3M405 262.5h1M466 262.5h1M473 262.5h3" stroke="#000" stroke-width="1" fill="none" shape-rendering="crispEdges"/><rect x="0" y="263" width="478" height="2" fill="#000"/><path d="M8 263.5h6M25 263.5h9M67 263.5h20M106 263.5h14M124 263.5h6M135 263.5h1M165 263.5h3M177 263.5h6M191 263.5h3M214 263.5h9M229 263.5h1M394 263.5h1M433 263.5h1M437 263.5h1M446 263.5h3M466 263.5h3" stroke="#38f020" stroke-width="1" fill="none" shape-rendering="crispEdges"/><path d="M12 264.5h14M40 264.5h14M56 264.5h6M67 264.5h3M71 264.5h1M73 264.5h3M83 264.5h6M96 264.5h6M111 264.5h6M134 264.5h4M152 264.5h9M167 264.5h2M172 264.5h1M178 264.5h4M210 264.5h20M241 264.5h1M294 264.5h2M316 264.5h1M371 264.5h2M381 264.5h3M406 264.5h1M428 264.5h1M431 264.5h3M447 264.5h2" stroke="#38f020" stroke-width="1" fill="none" shape-rendering="crispEdges"/></svg>
<div class="t" style="left:611.00px;top:204.64px;font-size:12px;line-height:16px;color:#000;font-weight:bold;letter-spacing:0.074px;">4000</div>
<div style="position:absolute;left:641px;top:212px;width:5px;height:1px;background:#000"></div>
<div class="t" style="left:611.00px;top:237.76px;font-size:12px;line-height:16px;color:#000;font-weight:bold;letter-spacing:0.074px;">3500</div>
<div style="position:absolute;left:641px;top:245px;width:5px;height:1px;background:#000"></div>
<div class="t" style="left:611.00px;top:270.89px;font-size:12px;line-height:16px;color:#000;font-weight:bold;letter-spacing:0.074px;">3000</div>
<div style="position:absolute;left:641px;top:278px;width:5px;height:1px;background:#000"></div>
<div class="t" style="left:611.00px;top:304.01px;font-size:12px;line-height:16px;color:#000;font-weight:bold;letter-spacing:0.074px;">2500</div>
<div style="position:absolute;left:641px;top:311px;width:5px;height:1px;background:#000"></div>
<div class="t" style="left:611.00px;top:337.14px;font-size:12px;line-height:16px;color:#000;font-weight:bold;letter-spacing:0.074px;">2000</div>
<div style="position:absolute;left:641px;top:344px;width:5px;height:1px;background:#000"></div>
<div class="t" style="left:611.00px;top:370.26px;font-size:12px;line-height:16px;color:#000;font-weight:bold;letter-spacing:0.074px;">1500</div>
<div style="position:absolute;left:641px;top:378px;width:5px;height:1px;background:#000"></div>
<div class="t" style="left:611.00px;top:403.39px;font-size:12px;line-height:16px;color:#000;font-weight:bold;letter-spacing:0.074px;">1000</div>
<div style="position:absolute;left:641px;top:411px;width:5px;height:1px;background:#000"></div>
<div class="t" style="left:618.00px;top:436.51px;font-size:12px;line-height:16px;color:#000;font-weight:bold;letter-spacing:-0.009px;">500</div>
<div style="position:absolute;left:641px;top:444px;width:5px;height:1px;background:#000"></div>
<div class="t" style="left:631.32px;top:469.64px;font-size:12px;line-height:16px;color:#000;font-weight:bold;">0</div>
<div style="position:absolute;left:641px;top:477px;width:5px;height:1px;background:#000"></div>
<div class="t" style="left:571.00px;top:337.00px;font-size:12px;line-height:16px;color:#000;width:57.00px;transform:rotate(-90deg);transform-origin:50% 50%;font-weight:bold;letter-spacing:-0.187px;">Range (m)</div>
<div class="t" style="left:627.00px;top:484.64px;font-size:12px;line-height:16px;color:#000;font-weight:bold;letter-spacing:0.324px;">286253</div>
<div class="t" style="left:1103.00px;top:484.64px;font-size:12px;line-height:16px;color:#000;font-weight:bold;letter-spacing:0.324px;">286752</div>
<div style="position:absolute;left:648px;top:479.5px;width:1px;height:5px;background:#000"></div>
<div style="position:absolute;left:1124px;top:479.5px;width:1px;height:5px;background:#000"></div>
<div class="t" style="left:611.00px;top:530.64px;font-size:12px;line-height:16px;color:#000;font-weight:bold;letter-spacing:0.074px;">4000</div>
<div style="position:absolute;left:641px;top:538px;width:5px;height:1px;background:#000"></div>
<div class="t" style="left:611.00px;top:563.70px;font-size:12px;line-height:16px;color:#000;font-weight:bold;letter-spacing:0.074px;">3500</div>
<div style="position:absolute;left:641px;top:571px;width:5px;height:1px;background:#000"></div>
<div class="t" style="left:611.00px;top:596.76px;font-size:12px;line-height:16px;color:#000;font-weight:bold;letter-spacing:0.074px;">3000</div>
<div style="position:absolute;left:641px;top:604px;width:5px;height:1px;background:#000"></div>
<div class="t" style="left:611.00px;top:629.83px;font-size:12px;line-height:16px;color:#000;font-weight:bold;letter-spacing:0.074px;">2500</div>
<div style="position:absolute;left:641px;top:637px;width:5px;height:1px;background:#000"></div>
<div class="t" style="left:611.00px;top:662.89px;font-size:12px;line-height:16px;color:#000;font-weight:bold;letter-spacing:0.074px;">2000</div>
<div style="position:absolute;left:641px;top:670px;width:5px;height:1px;background:#000"></div>
<div class="t" style="left:611.00px;top:695.95px;font-size:12px;line-height:16px;color:#000;font-weight:bold;letter-spacing:0.074px;">1500</div>
<div style="position:absolute;left:641px;top:703px;width:5px;height:1px;background:#000"></div>
<div class="t" style="left:611.00px;top:729.01px;font-size:12px;line-height:16px;color:#000;font-weight:bold;letter-spacing:0.074px;">1000</div>
<div style="position:absolute;left:641px;top:736px;width:5px;height:1px;background:#000"></div>
<div class="t" style="left:618.00px;top:762.08px;font-size:12px;line-height:16px;color:#000;font-weight:bold;letter-spacing:-0.009px;">500</div>
<div style="position:absolute;left:641px;top:769px;width:5px;height:1px;background:#000"></div>
<div class="t" style="left:631.32px;top:795.14px;font-size:12px;line-height:16px;color:#000;font-weight:bold;">0</div>
<div style="position:absolute;left:641px;top:802px;width:5px;height:1px;background:#000"></div>
<div class="t" style="left:571.00px;top:662.75px;font-size:12px;line-height:16px;color:#000;width:57.00px;transform:rotate(-90deg);transform-origin:50% 50%;font-weight:bold;letter-spacing:-0.187px;">Range (m)</div>
<div class="t" style="left:627.00px;top:810.64px;font-size:12px;line-height:16px;color:#000;font-weight:bold;letter-spacing:0.324px;">286253</div>
<div class="t" style="left:1103.00px;top:810.64px;font-size:12px;line-height:16px;color:#000;font-weight:bold;letter-spacing:0.324px;">286752</div>
<div style="position:absolute;left:648px;top:805.5px;width:1px;height:5px;background:#000"></div>
<div style="position:absolute;left:1124px;top:805.5px;width:1px;height:5px;background:#000"></div>
<div class="t" style="left:576.00px;top:179.67px;font-size:15px;line-height:20px;color:#1a1a1a;letter-spacing:-0.124px;">Backscatter</div>
<div class="t" style="left:576.00px;top:505.67px;font-size:15px;line-height:20px;color:#1a1a1a;letter-spacing:0.352px;">Doppler</div>
<div style="position:absolute;left:1151px;top:202px;width:20.5px;height:150px;background:#e878c0;">
<div style="position:absolute;left:1px;top:1px;right:1px;bottom:1px;background:linear-gradient(to bottom,#000 0,#000 4px,#a800b0 5px,#a00090 12px,#c00060 22px,#f00018 31px,#ff1000 35px,#ff8000 42px,#ffc000 48px,#ffff20 58px,#60f010 66px,#10e020 74px,#18c048 88px,#1a9878 103px,#2070b8 114px,#2838f8 126px,#7070e8 134px,#c8c8e8 141px,#ffffff 142px,#ffffff 144px,#ff30ff 145px,#000 146px,#000 100%)"></div>
<div style="position:absolute;left:0;top:0;width:100%;height:1px;background:#f0e8d8"></div></div>
<div style="position:absolute;left:1151px;top:528px;width:20px;height:150px;background:#000;">
<div style="position:absolute;left:1px;top:1px;right:1px;bottom:1px;background:linear-gradient(to bottom,#f828f8 0,#f828f8 4px,#000 4px,#000 5px,#a000a8 6px,#a80088 13px,#c80058 22px,#f00018 31px,#ff1000 35px,#ff8000 42px,#ffc000 48px,#ffff20 58px,#60f010 66px,#10e820 75px,#18c048 89px,#1a9878 104px,#2070b8 115px,#2838f8 127px,#7070e8 135px,#c8c8e8 141px,#ffffff 142px,#ffffff 144px,#000 144px,#000 100%)"></div></div>
<div style="position:absolute;left:1173px;top:208px;width:5px;height:1px;background:#000"></div>
<div class="t" style="left:1180.00px;top:200.64px;font-size:12px;line-height:16px;color:#000;font-weight:bold;letter-spacing:-0.171px;">-3.0</div>
<div style="position:absolute;left:1173px;top:276px;width:5px;height:1px;background:#000"></div>
<div class="t" style="left:1180.00px;top:268.64px;font-size:12px;line-height:16px;color:#000;font-weight:bold;letter-spacing:-0.171px;">-5.5</div>
<div style="position:absolute;left:1173px;top:345px;width:5px;height:1px;background:#000"></div>
<div class="t" style="left:1180.00px;top:337.64px;font-size:12px;line-height:16px;color:#000;font-weight:bold;letter-spacing:-0.171px;">-8.0</div>
<div style="position:absolute;left:1173px;top:534px;width:5px;height:1px;background:#000"></div>
<div class="t" style="left:1180.00px;top:526.64px;font-size:12px;line-height:16px;color:#000;font-weight:bold;letter-spacing:-0.091px;">10.0</div>
<div style="position:absolute;left:1173px;top:602px;width:5px;height:1px;background:#000"></div>
<div class="t" style="left:1180.00px;top:594.64px;font-size:12px;line-height:16px;color:#000;font-weight:bold;letter-spacing:0.104px;">0.0</div>
<div style="position:absolute;left:1173px;top:671px;width:5px;height:1px;background:#000"></div>
<div class="t" style="left:1180.00px;top:663.64px;font-size:12px;line-height:16px;color:#000;font-weight:bold;letter-spacing:-0.072px;">-10.0</div>
<div class="t" style="left:1181.00px;top:267.00px;font-size:12px;line-height:16px;color:#000;width:70.00px;transform:rotate(90deg);transform-origin:50% 50%;font-weight:bold;letter-spacing:-0.002px;">log B (/m/sr)</div>
<div class="t" style="left:1183.00px;top:592.00px;font-size:12px;line-height:16px;color:#000;width:78.00px;transform:rotate(90deg);transform-origin:50% 50%;font-weight:bold;letter-spacing:0.044px;">Velocity (m/s)</div>
<div style="position:absolute;left:153px;top:361px;width:227px;height:83px;border:2px solid #081a5a;box-shadow:inset 1px 1px 0 rgba(140,155,200,.8),1px 1px 0 rgba(140,155,200,.7)"></div>
<div style="position:absolute;left:153px;top:442px;width:227px;height:56px;border:2px solid #081a5a;box-shadow:inset 1px 1px 0 rgba(140,155,200,.8),1px 1px 0 rgba(140,155,200,.7)"></div>
<div style="position:absolute;left:378px;top:361px;width:183px;height:137px;border:2px solid #081a5a;box-shadow:inset 1px 1px 0 rgba(140,155,200,.8),1px 1px 0 rgba(140,155,200,.7)"></div>
<div style="position:absolute;left:144px;top:700px;width:420px;height:108px;border:2px solid #081a5a;box-shadow:inset 1px 1px 0 rgba(140,155,200,.8),1px 1px 0 rgba(140,155,200,.7)"></div>
<div style="position:absolute;left:166px;top:374px;width:187px;height:34px;background:linear-gradient(to bottom,#d6d6d6 0,#cbcbcb 50%,#bdbdbd 100%);
border-style:solid;border-width:3px 4px 3px 4px;border-color:#e4e4e4 #8e8e8e #787878 #e0e0e0;box-shadow:0 0 0 1px #5a5a5a"></div>
<div class="t" style="left:175.00px;top:382.67px;font-size:15px;line-height:20px;color:#262626;letter-spacing:0.352px;">Renew background now</div>
<div style="position:absolute;left:353px;top:382px;width:19px;height:19px;border-radius:50%;background:linear-gradient(135deg,#6e6246 0%,#a89c7c 60%,#c4b896 100%)"></div>
<div style="position:absolute;left:355px;top:384px;width:15px;height:15px;border-radius:50%;background:radial-gradient(circle at 40% 35%,#3a6e28 0%,#22501a 45%,#163a12 100%)"></div>
<div class="t" style="left:175.00px;top:420.14px;font-size:12px;line-height:16px;color:#000;font-weight:bold;transform:scaleX(0.9327);transform-origin:0 50%;">Rays in background</div>
<div style="position:absolute;left:286px;top:415px;width:11px;height:24px;border-radius:50%/40%;background:linear-gradient(to right,#f2f2f2 0,#d8d8d8 45%,#a8a8a8 100%);box-shadow:1px 1px 1px rgba(60,50,30,.6)"></div>
<svg style="left:286px;top:415px" width="11" height="24" viewBox="0 0 11 24"><path d="M3.0 9.0 L5.5 5.0 L8.0 9.0 M3.0 15.0 L5.5 19.0 L8.0 15.0" stroke="#666" stroke-width="1" fill="none"/><path d="M1 12.0 H10" stroke="#aaa" stroke-width="1"/></svg>
<div style="position:absolute;left:298px;top:417px;width:29px;height:23px;border-style:solid;border-width:3px;border-color:#7c6e4e #aea284 #b4a88a #7c6e4e"></div>
<div style="position:absolute;left:301px;top:420px;width:23px;height:17px;background:#ffc000"></div>
<div class="t" style="left:304.00px;top:422.13px;font-size:11px;line-height:14px;color:#000;font-weight:bold;">10</div>
<div class="t" style="left:174.00px;top:463.64px;font-size:12px;line-height:16px;color:#000;font-weight:bold;transform:scaleX(0.9429);transform-origin:0 50%;">Display SNR threshold</div>
<div style="position:absolute;left:300px;top:457px;width:11px;height:24px;border-radius:50%/40%;background:linear-gradient(to right,#f2f2f2 0,#d8d8d8 45%,#a8a8a8 100%);box-shadow:1px 1px 1px rgba(60,50,30,.6)"></div>
<svg style="left:300px;top:457px" width="11" height="24" viewBox="0 0 11 24"><path d="M3.0 9.0 L5.5 5.0 L8.0 9.0 M3.0 15.0 L5.5 19.0 L8.0 15.0" stroke="#666" stroke-width="1" fill="none"/><path d="M1 12.0 H10" stroke="#aaa" stroke-width="1"/></svg>
<div style="position:absolute;left:312px;top:459px;width:43px;height:23px;border-style:solid;border-width:3px;border-color:#7c6e4e #aea284 #b4a88a #7c6e4e"></div>
<div style="position:absolute;left:315px;top:462px;width:37px;height:17px;background:#ffc000"></div>
<div class="t" style="left:318.00px;top:464.13px;font-size:11px;line-height:14px;color:#000;font-weight:bold;">1</div>
<div class="t" style="left:382.00px;top:366.13px;font-size:11px;line-height:14px;color:#0a2274;font-weight:bold;letter-spacing:-0.202px;">Scanner position</div>
<div style="position:absolute;left:431px;top:389px;width:95px;height:35px;border-style:solid;border-width:4px;border-color:#7a6c4c #aca082 #b2a688 #7a6c4c"></div>
<div style="position:absolute;left:435px;top:393px;width:87px;height:27px;background:#fdfdfd"></div>
<div class="t" style="left:439.00px;top:397.00px;font-size:17px;line-height:22px;color:#000;letter-spacing:0.080px;">078.997</div>
<div style="position:absolute;left:431px;top:437px;width:95px;height:35px;border-style:solid;border-width:4px;border-color:#7a6c4c #aca082 #b2a688 #7a6c4c"></div>
<div style="position:absolute;left:435px;top:441px;width:87px;height:27px;background:#fdfdfd"></div>
<div class="t" style="left:439.00px;top:445.00px;font-size:17px;line-height:22px;color:#000;letter-spacing:0.080px;">000.099</div>
<div class="t" style="left:405.00px;top:396.72px;font-size:19px;line-height:25px;color:#000;transform:scaleX(0.9474);transform-origin:0 50%;">AZ</div>
<div class="t" style="left:410.00px;top:444.72px;font-size:19px;line-height:25px;color:#000;transform:scaleX(0.7316);transform-origin:0 50%;">EL</div>
<div class="t" style="left:749.00px;top:509.64px;font-size:12px;line-height:16px;color:#000;font-weight:bold;transform:scaleX(0.9228);transform-origin:0 50%;">Average number</div>
<div style="position:absolute;left:841px;top:506px;width:28px;height:21px;border-style:solid;border-width:2px;border-color:#7a6c4c #b6aa8c #bcb092 #7a6c4c"></div>
<div style="position:absolute;left:843px;top:508px;width:24px;height:17px;background:#e6e6e6"></div>
<div class="t" style="left:847.00px;top:510.13px;font-size:11px;line-height:14px;color:#000;font-weight:bold;">1</div>
<div class="t" style="left:873.00px;top:508.64px;font-size:12px;line-height:16px;color:#000;font-weight:bold;letter-spacing:0.336px;">of</div>
<div style="position:absolute;left:889px;top:506px;width:28px;height:21px;border-style:solid;border-width:2px;border-color:#7a6c4c #b6aa8c #bcb092 #7a6c4c"></div>
<div style="position:absolute;left:891px;top:508px;width:24px;height:17px;background:#e6e6e6"></div>
<div class="t" style="left:895.00px;top:510.13px;font-size:11px;line-height:14px;color:#000;font-weight:bold;">1</div>
<div class="t" style="left:1019.00px;top:506.64px;font-size:12px;line-height:16px;color:#000;font-weight:bold;letter-spacing:-0.188px;">Backscatter</div>
<div style="position:absolute;left:1108px;top:518px;width:14px;height:11px;border-radius:5px;background:rgba(50,40,20,.45);filter:blur(2px)"></div>
<div style="position:absolute;left:1099px;top:510px;width:25px;height:12px;border-radius:6px;background:linear-gradient(to bottom,#8a8a8a 0,#4a4a4a 30%,#2a2a2a 70%,#555 100%);box-shadow:inset -2px 0 1px rgba(220,220,220,.7)"></div>
<div style="position:absolute;left:1099px;top:510px;width:12px;height:12px;border-radius:6px;background:radial-gradient(circle at 40% 38%,#fff 0,#d4d4d4 40%,#8a8a8a 100%)"></div>
<div class="t" style="left:160.00px;top:702.93px;font-size:11px;line-height:14px;color:#0a2274;font-weight:bold;letter-spacing:0.061px;">Data Logging</div>
<div class="t" style="left:164.00px;top:721.94px;font-size:12px;line-height:16px;color:#000;font-weight:bold;letter-spacing:-0.250px;">Processed Data file</div>
<div style="position:absolute;left:283px;top:714px;width:133px;height:22px;background:linear-gradient(to bottom,#d6d6d6 0,#cbcbcb 50%,#bdbdbd 100%);
border-style:solid;border-width:3px 4px 3px 4px;border-color:#e4e4e4 #8e8e8e #787878 #e0e0e0;box-shadow:0 0 0 1px #5a5a5a"></div>
<div class="t" style="left:289.00px;top:717.64px;font-size:12px;line-height:16px;color:#000;font-weight:bold;letter-spacing:-0.201px;">Restart processed file</div>
<div class="t" style="left:507.00px;top:715.93px;font-size:11px;line-height:14px;color:#0a2274;font-weight:bold;letter-spacing:0.090px;">Logging</div>
<div class="t" style="left:162.00px;top:761.84px;font-size:12px;line-height:16px;color:#000;font-weight:bold;letter-spacing:-0.003px;">RAW Data file</div>
<div style="position:absolute;left:147px;top:740px;width:364px;height:22px;border-style:solid;border-width:3px;border-color:#7a6c4c #aca082 #b2a688 #7a6c4c"></div>
<div style="position:absolute;left:150px;top:743px;width:15px;height:16px;background:#ffc000"></div>
<div class="t" style="left:151.50px;top:744.63px;font-size:11px;line-height:14px;color:#000;font-weight:bold;">C</div>
<div style="position:absolute;left:165px;top:743px;width:10px;height:16px;background:#d8d8d8"></div>
<svg style="left:166px;top:743px" width="9" height="16" viewBox="0 0 9 16"><path d="M1.500 2.500h3v4h-3Z M3 6.500v3 M3.500 8.500h3v4h-3Z" fill="#fff" stroke="#000" stroke-width="1"/></svg>
<div style="position:absolute;left:175px;top:743px;width:333px;height:16px;background:#fcfcfc"></div>
<div class="t" style="left:177.00px;top:745.10px;font-size:8.5px;line-height:11px;color:#000;transform:scaleX(0.8975);transform-origin:0 50%;">C:\Lidar\Data\Proc\2023\202308\20230824\Stare_162_20230824_13.hpl</div>
<div style="position:absolute;left:147px;top:780px;width:364px;height:22px;border-style:solid;border-width:3px;border-color:#7a6c4c #aca082 #b2a688 #7a6c4c"></div>
<div style="position:absolute;left:150px;top:783px;width:15px;height:16px;background:#ffc000"></div>
<div class="t" style="left:151.50px;top:784.63px;font-size:11px;line-height:14px;color:#000;font-weight:bold;">C</div>
<div style="position:absolute;left:165px;top:783px;width:10px;height:16px;background:#d8d8d8"></div>
<svg style="left:166px;top:783px" width="9" height="16" viewBox="0 0 9 16"><path d="M1.500 2.500h3v4h-3Z M3 6.500v3 M3.500 8.500h3v4h-3Z" fill="#fff" stroke="#000" stroke-width="1"/></svg>
<div style="position:absolute;left:175px;top:783px;width:333px;height:16px;background:#fcfcfc"></div>
<div style="position:absolute;left:514.5px;top:742px;width:42px;height:24px;border-radius:50%;background:rgba(60,50,30,.45);filter:blur(2px)"></div>
<div style="position:absolute;left:512.5px;top:739px;width:42px;height:24px;border-radius:50%;background:linear-gradient(to bottom,#a4a4a4 0,#bcbcbc 45%,#d4d4d4 100%);box-shadow:inset 0 0 0 1px #4a4a4a"></div>
<svg style="left:512.5px;top:739px" width="42" height="24" viewBox="0 0 42 24"><path d="M27 5.500 C33 6 39 9.500 39 12.0 C39 14.5 33 18 27 18.5 Z" fill="#5cf024"/></svg>
<div class="t" style="left:516.50px;top:744.14px;font-size:12px;line-height:16px;color:#000;font-weight:bold;letter-spacing:-0.252px;">ON</div>
<div style="position:absolute;left:514.5px;top:781px;width:42px;height:24px;border-radius:50%;background:rgba(60,50,30,.45);filter:blur(2px)"></div>
<div style="position:absolute;left:512.5px;top:778px;width:42px;height:24px;border-radius:50%;background:linear-gradient(to bottom,#f6f6f6 0,#dcdcdc 45%,#a8a8a8 100%);box-shadow:inset 0 0 0 1px #4a4a4a"></div>
<svg style="left:512.5px;top:778px" width="42" height="24" viewBox="0 0 42 24"><path d="M27 5.500 C33 6 39 9.500 39 12.0 C39 14.5 33 18 27 18.5 Z" fill="#2c6a24"/></svg>
<div class="t" style="left:516.50px;top:783.14px;font-size:12px;line-height:16px;color:#000;font-weight:bold;transform:scaleX(0.8542);transform-origin:0 50%;">OFF</div>
<div style="position:absolute;left:154px;top:817px;width:98px;height:46px;background:linear-gradient(to bottom,#d6d6d6 0,#cbcbcb 50%,#bdbdbd 100%);
border-style:solid;border-width:3px 4px 3px 4px;border-color:#e4e4e4 #8e8e8e #787878 #e0e0e0;box-shadow:0 0 0 1px #5a5a5a"></div>
<div class="t" style="left:184.00px;top:819.87px;font-size:15px;line-height:20px;color:#ff1c1c;transform:scaleX(0.9366);transform-origin:0 50%;">STOP</div>
<div class="t" style="left:173.00px;top:840.97px;font-size:15px;line-height:20px;color:#ff1c1c;letter-spacing:0.413px;">software</div>
<div style="position:absolute;left:394px;top:818px;width:115px;height:46px;background:linear-gradient(to bottom,#d6d6d6 0,#cbcbcb 50%,#bdbdbd 100%);
border-style:solid;border-width:3px 4px 3px 4px;border-color:#e4e4e4 #8e8e8e #787878 #e0e0e0;box-shadow:0 0 0 1px #5a5a5a"></div>
<div class="t" style="left:401.00px;top:821.67px;font-size:15px;line-height:20px;color:#111;letter-spacing:-0.005px;">Change LiDAR</div>
<div class="t" style="left:423.00px;top:841.97px;font-size:15px;line-height:20px;color:#111;letter-spacing:0.225px;">Settings</div>
<div style="position:absolute;left:112px;top:943px;width:1436px;height:43px;background:#1c1c1c"></div>
<div style="position:absolute;left:112px;top:943px;width:1436px;height:1px;background:#000"></div>
<div style="position:absolute;left:307px;top:943px;width:48px;height:42px;background:#4a4a4a"></div>
<svg style="left:125.700px;top:956.500px" width="17" height="17" viewBox="0 0 18 18"><path d="M0 2.500 L7.300 1.500 V8.400 H0 Z M8.200 1.400 L17 0.200 V8.400 H8.200 Z M0 9.300 H7.300 V16.200 L0 15.200 Z M8.200 9.300 H17 V17.600 L8.200 16.400 Z" fill="#fff"/></svg>
<svg style="left:172px;top:955px" width="20" height="20" viewBox="0 0 20 20"><path d="M1.700 5 V2.600 H14.300 V5 M1.700 14.500 V16.900 H14.300 V14.500 M3.600 5.600 H12.400 V13.900 H3.600 Z M16.600 1.800 V6 M16.600 10.500 V17.500" fill="none" stroke="#fff" stroke-width="1.300"/><rect x="15.400" y="6.300" width="2.500" height="2.700" fill="#fff"/></svg>
<svg style="left:221px;top:954px" width="24" height="22" viewBox="0 0 24 22"><path d="M1 3 Q1 1.500 2.500 1.500 H8 L10 3.500 H21.500 Q23 3.500 23 5 V18 H1 Z" fill="#e8a93a"/><path d="M1 6 H23 V18.500 Q23 19.500 22 19.500 H2 Q1 19.500 1 18.500 Z" fill="#ffd970"/><path d="M6 12 H18 V19.500 H15 V15 H9 V19.500 H6 Z" fill="#3c8fe0"/></svg>
<svg style="left:269px;top:952px" width="26" height="26" viewBox="0 0 26 26"><defs><radialGradient id="ffg" cx="0.6" cy="0.25" r="0.9"><stop offset="0" stop-color="#ffe030"/><stop offset="0.35" stop-color="#ff9a1a"/><stop offset="0.7" stop-color="#ff4a3a"/><stop offset="1" stop-color="#e0206a"/></radialGradient></defs>
<path d="M13 3.500 C15 1.500 16.500 1 17 0.500 C17 3 19.500 4.500 21.500 7 C24.500 11 24 17 20.500 20.500 C17 24 10.500 24.500 6 21.500 C1.500 18.500 0.500 12.500 3 8.500 C3.200 10 3.800 10.500 4.500 11 C4.500 8 6.500 5.500 8 5 C8 6.500 9 7.500 10 7.500 C11 6 12 4.500 13 3.500Z" fill="url(#ffg)"/>
<circle cx="13.500" cy="13.500" r="5.200" fill="#7a3cd0"/><path d="M9 11 C11 9.500 14 10 15 11.500 C13 11.500 12 12.500 12.500 14 C10.500 14 9 12.500 9 11Z" fill="#ff9a1a"/></svg>
<svg style="left:319px;top:953px" width="24" height="24" viewBox="0 0 24 24"><rect width="24" height="24" fill="#ececec"/><path d="M6.500 21v-7.500h3v-2.500h4v-3h2v5.500h3v7.500 M9.500 21v-3h6v3" fill="#fff" stroke="#000" stroke-width="1.400"/><path d="M9 14.500l3 1.500l4-2.500" stroke="#e02020" stroke-width="1.400" fill="none"/><text x="12.500" y="8" font-family="Liberation Sans,sans-serif" font-size="9" fill="#3030b0">XR</text></svg>
<svg style="left:368px;top:953px" width="24" height="24" viewBox="0 0 24 24"><rect width="24" height="24" fill="#c6c6c6"/><text x="1" y="10" font-family="Liberation Sans,sans-serif" font-size="9.500" fill="#111" textLength="21" lengthAdjust="spacingAndGlyphs">Scan</text><text x="1" y="18" font-family="Liberation Sans,sans-serif" font-size="9" fill="#111" textLength="22" lengthAdjust="spacingAndGlyphs">sched</text></svg>
<svg style="left:419px;top:953px" width="21" height="24" viewBox="0 0 21 24"><rect width="21" height="24" fill="#2a2ab8"/><rect y="0" width="21" height="7" fill="#1c1ca8"/><text x="1.500" y="6.500" font-family="Liberation Sans,sans-serif" font-size="6.500" font-weight="bold" fill="#d8d8ff" textLength="18" lengthAdjust="spacingAndGlyphs">VEER</text><path d="M0 9.500h21M0 12.500h21M0 15.500h21M0 18.500h21M0 21.500h21" stroke="#a8a8f0" stroke-width="1.400"/></svg>
<div style="position:absolute;left:213px;top:983px;width:40px;height:2px;background:#6f9fd0"></div>
<div style="position:absolute;left:307px;top:983px;width:48px;height:2px;background:#6f9fd0"></div>
<div style="position:absolute;left:360px;top:983px;width:40px;height:2px;background:#6f9fd0"></div>
<div style="position:absolute;left:409px;top:983px;width:32px;height:2px;background:#6f9fd0"></div>
<div style="position:absolute;left:443px;top:983px;width:5px;height:2px;background:#6f9fd0"></div>
<div style="position:absolute;left:1243px;top:954px;width:21px;height:21px;border-radius:50%;background:radial-gradient(circle at 40% 30%,#ffb347 0%,#ff9a1e 50%,#f07c10 100%)"></div>
<div class="t" style="left:1274.00px;top:956.66px;font-size:13.5px;line-height:18px;color:#fff;transform:scaleX(0.9421);transform-origin:0 50%;">77°F</div>
<div class="t" style="left:1310.00px;top:956.66px;font-size:13.5px;line-height:18px;color:#fff;letter-spacing:-0.055px;">Sunny</div>
<svg style="left:1372px;top:959px" width="14" height="10" viewBox="0 0 14 10"><path d="M1.500 8 L7 2.500 L12.500 8" fill="none" stroke="#fff" stroke-width="1.400"/></svg>
<div class="t" style="left:1397.00px;top:957.64px;font-size:12px;line-height:16px;color:#fff;transform:scaleX(0.8843);transform-origin:0 50%;">ENG</div>
<div class="t" style="left:1447.50px;top:947.94px;font-size:12px;line-height:16px;color:#fff;transform:scaleX(0.9321);transform-origin:0 50%;">13:10</div>
<div class="t" style="left:1432.50px;top:965.94px;font-size:12px;line-height:16px;color:#fff;letter-spacing:-0.208px;">24/08/2023</div>
<svg style="left:1508px;top:956px" width="18" height="19" viewBox="0 0 18 19"><path d="M1 1.500 H17 V13 H11.500 L9 16.500 L9 13 H1 Z" fill="#fff"/><path d="M4 5h10M4 7.500h10M4 10h7" stroke="#1f1f1f" stroke-width="1"/></svg>
<div style="position:absolute;left:1545px;top:946px;width:1px;height:37px;background:#555"></div>
</body></html>
